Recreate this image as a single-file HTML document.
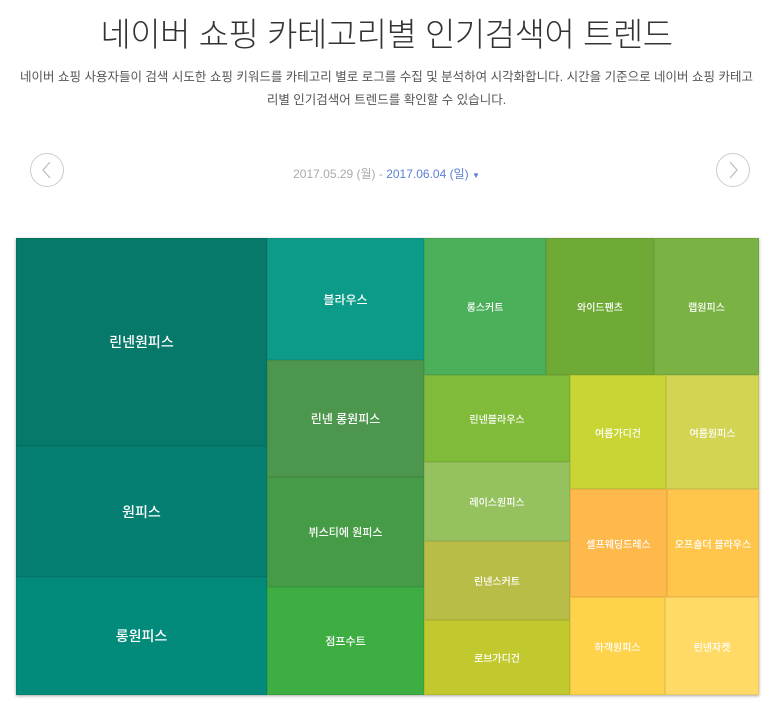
<!DOCTYPE html>
<html><head><meta charset="utf-8"><style>
body{margin:0;width:773px;height:710px;background:#fff;font-family:"Liberation Sans","Noto Sans CJK KR",sans-serif;position:relative;overflow:hidden}
h1{position:absolute;top:8px;left:0;width:773px;margin:0;text-align:center;font-weight:300;font-size:33px;color:#333;letter-spacing:-0.5px}
.desc{position:absolute;top:66px;left:5px;width:763px;text-align:center;font-size:12.5px;line-height:23px;color:#555}
.circ{position:absolute;top:153px;width:32px;height:32px;border:1px solid #ccc;border-radius:50%}
.date{position:absolute;top:165px;left:0;width:773px;text-align:center;font-size:12px;color:#aaa}
.date b{font-weight:normal;color:#5a7fd6}
.tm{position:absolute;left:16px;top:238px;width:743px;height:457px;box-shadow:0 1px 3px rgba(0,0,0,.35)}
.c{position:absolute;display:flex;align-items:center;justify-content:center;color:#fff;font-size:10px;font-weight:500;box-shadow:inset 0 0 0 1px rgba(0,0,0,.07)}
</style></head><body>
<h1>네이버 쇼핑 카테고리별 인기검색어 트렌드</h1>
<div class="desc">네이버 쇼핑 사용자들이 검색 시도한 쇼핑 키워드를 카테고리 별로 로그를 수집 및 분석하여 시각화합니다. 시간을 기준으로 네이버 쇼핑 카테고<br>리별 인기검색어 트렌드를 확인할 수 있습니다.</div>
<div class="circ" style="left:30px"><svg width="32" height="32"><path d="M19 8 L12 16 L19 24" fill="none" stroke="#bbb" stroke-width="1.2"/></svg></div>
<div class="circ" style="left:716px"><svg width="32" height="32"><path d="M13 8 L20 16 L13 24" fill="none" stroke="#bbb" stroke-width="1.2"/></svg></div>
<div class="date">2017.05.29 (월) - <b>2017.06.04 (일) <span style="font-size:8px">▼</span></b></div>
<div class="tm">
<div class="c" style="left:0;top:0;width:251px;height:208px;background:#06796a;font-size:14px">린넨원피스</div>
<div class="c" style="left:0;top:208px;width:251px;height:131px;background:#057f71;font-size:14px">원피스</div>
<div class="c" style="left:0;top:339px;width:251px;height:118px;background:#028b7b;font-size:14px">롱원피스</div>
<div class="c" style="left:251px;top:0;width:157px;height:122px;background:#0c9b89;font-size:12px">블라우스</div>
<div class="c" style="left:251px;top:122px;width:157px;height:117px;background:#4c974d;font-size:12px">린넨 롱원피스</div>
<div class="c" style="left:251px;top:239px;width:157px;height:110px;background:#469c46;font-size:11px">뷔스티에 원피스</div>
<div class="c" style="left:251px;top:349px;width:157px;height:108px;background:#3eae43;font-size:11px">점프수트</div>
<div class="c" style="left:408px;top:0;width:122px;height:137px;background:#4caf59">롱스커트</div>
<div class="c" style="left:530px;top:0;width:108px;height:137px;background:#70aa36">와이드팬츠</div>
<div class="c" style="left:638px;top:0;width:105px;height:137px;background:#7ab343">랩원피스</div>
<div class="c" style="left:408px;top:137px;width:146px;height:87px;background:#80bb3a">린넨블라우스</div>
<div class="c" style="left:408px;top:224px;width:146px;height:79px;background:#95c25e">레이스원피스</div>
<div class="c" style="left:408px;top:303px;width:146px;height:79px;background:#b8bd48">린넨스커트</div>
<div class="c" style="left:408px;top:382px;width:146px;height:75px;background:#c1c92e">로브가디건</div>
<div class="c" style="left:554px;top:137px;width:96px;height:114px;background:#c8d534">여름가디건</div>
<div class="c" style="left:650px;top:137px;width:93px;height:114px;background:#d3d454">여름원피스</div>
<div class="c" style="left:554px;top:251px;width:97px;height:108px;background:#ffb84b">셀프웨딩드레스</div>
<div class="c" style="left:651px;top:251px;width:92px;height:108px;background:#ffc64b">오프숄더 블라우스</div>
<div class="c" style="left:554px;top:359px;width:95px;height:98px;background:#ffd24b">하객원피스</div>
<div class="c" style="left:649px;top:359px;width:94px;height:98px;background:#ffda66">린넨자켓</div>
</div>
</body></html>
